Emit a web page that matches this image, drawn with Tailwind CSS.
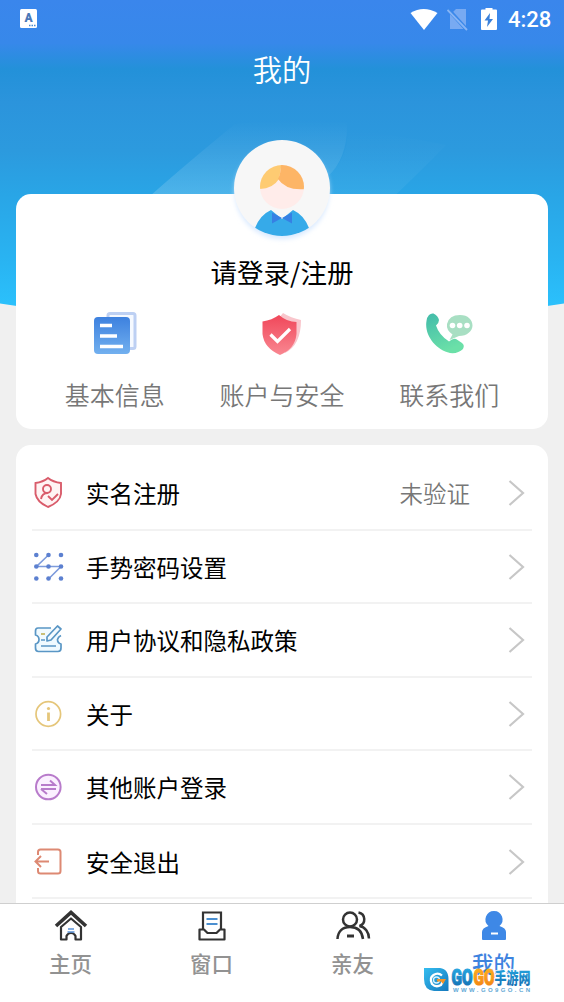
<!DOCTYPE html>
<html lang="zh-CN">
<head>
  <meta charset="UTF-8">
  <meta name="viewport" content="width=device-width, initial-scale=1.0">
  <title>我的</title>
  <script src="https://cdn.jsdelivr.net/npm/@tailwindcss/browser@4"></script>
</head>

<body class="bg-[#f0f0f0] font-['Noto_Sans_CJK_SC',sans-serif]">
  <div class="relative flex flex-col w-[564px] h-[1002px] overflow-hidden">

    <!-- Header background -->
    <svg class="absolute top-0 left-0" width="564" height="320" viewBox="0 0 564 320">
      <defs>
        <linearGradient id="sky" gradientUnits="userSpaceOnUse" x1="0" y1="0" x2="0" y2="308">
          <stop offset="0" stop-color="#3a86ec" />
          <stop offset="0.14" stop-color="#3788ea" />
          <stop offset="0.225" stop-color="#2391d9" />
          <stop offset="0.33" stop-color="#2b94dc" />
          <stop offset="0.49" stop-color="#2c9ade" />
          <stop offset="0.63" stop-color="#29a5e6" />
          <stop offset="0.85" stop-color="#29b4f2" />
          <stop offset="1" stop-color="#2bc1fc" />
        </linearGradient>
        <linearGradient id="beam" x1="0" y1="0" x2="0" y2="1">
          <stop offset="0" stop-color="#fff" stop-opacity="0" />
          <stop offset="1" stop-color="#fff" stop-opacity="0.17" />
        </linearGradient>
        <linearGradient id="beam2" x1="0" y1="0" x2="0" y2="1">
          <stop offset="0" stop-color="#fff" stop-opacity="0" />
          <stop offset="1" stop-color="#fff" stop-opacity="0.06" />
        </linearGradient>
      </defs>
      <path d="M0 0H564V303.500Q282 348 0 303.500Z" fill="url(#sky)" />
      <path d="M150 196Q185 165 235 124Q290 118 347 122Q348 158 328 176L318 196Z" fill="url(#beam)" />
      <path d="M328 176Q348 158 348 130Q400 135 446 145Q420 172 388 202H318Z" fill="url(#beam2)" />
    </svg>

    <!-- Status bar -->
    <div class="relative flex items-center h-10 pl-5 pr-3 text-white">
      <svg width="17" height="19" viewBox="0 0 17 19" class="mt-[-3px]">
        <rect width="17" height="19" rx="1.500" fill="#fff" />
        <text x="8.500" y="13" text-anchor="middle" font-family="Roboto" font-weight="900" font-size="12" fill="#4a78b8">A</text>
        <path d="M9 16.500h7" stroke="#4a8ad0" stroke-width="1.500" stroke-dasharray="1.500 1" />
      </svg>
      <svg class="ml-auto" width="28" height="24" viewBox="0 0 28 24">
        <path d="M0.500 5Q13.500 -3 27.500 5L14 22Z" fill="#fff" />
      </svg>
      <svg class="ml-[9px]" width="22" height="24" viewBox="0 0 22 24">
        <path d="M9 1H19V21H3V7Z" fill="#78aaf2" />
        <path d="M0.500 0.500L20 22" stroke="#3a88ea" stroke-width="4" />
        <path d="M0.500 2L20 22" stroke="#87b5f5" stroke-width="1.800" />
      </svg>
      <svg class="ml-3" width="16" height="24" viewBox="0 0 16 24">
        <path d="M1 1.500H4.500V-0.500H11.500V1.500H15Q16 1.500 16 2.500V21Q16 22 15 22H1Q0 22 0 21V2.500Q0 1.500 1 1.500Z" fill="#fff" />
        <path d="M9 5L3.500 12.500H7L6 19L12 11H8.500Z" fill="#3a80da" />
      </svg>
      <span class="ml-[11px] w-[44px] whitespace-nowrap font-['Roboto'] font-medium text-[22px] leading-6">4:28</span>
    </div>

    <h1 class="relative mt-3 text-center text-[29.300px] leading-8 font-[350] text-white">我的</h1>

    <!-- Profile card -->
    <section class="relative mt-[110px] mx-4 h-[235px] shrink-0 rounded-[15px] bg-white flex flex-col items-center">
      <svg class="-mt-[58px] shrink-0" width="112" height="116" viewBox="0 0 112 116">
        <defs>
          <clipPath id="face"><circle cx="56" cy="51" r="22" /></clipPath>
          <clipPath id="disc"><circle cx="56" cy="52" r="48" /></clipPath>
          <filter id="soft" x="-20%" y="-20%" width="140%" height="140%"><feGaussianBlur stdDeviation="2.500" /></filter>
        </defs>
        <circle cx="56" cy="56" r="47" fill="#d8e9ff" filter="url(#soft)" />
        <circle cx="56" cy="52" r="48" fill="#f7f7f7" />
        <circle cx="56" cy="51" r="22" fill="#ffecea" />
        <g clip-path="url(#face)">
          <path d="M30 53V26H56L53 43Q46 54 30 53Z" fill="#fecb72" />
          <path d="M55 26H80V53Q60 55 52 43Q55 38 55 26Z" fill="#fdb566" />
        </g>
        <path d="M29 92Q34 79 45 74L56 83L67 74Q78 79 83 92L84 104H28Z" fill="#36aae9" clip-path="url(#disc)" />
        <path d="M46 76.500L56 82L66 76.500V87.500L56 82L46 87.500Z" fill="#3680e4" />
      </svg>
      <p class="mt-[2px] text-[26.500px] leading-9 text-black">请登录/注册</p>

      <div class="mt-[21px] grid w-[502px] grid-cols-3 justify-items-center text-[25px] leading-9 text-[#777] font-[350]">
        <div class="flex flex-col items-center">
          <svg width="48" height="48" viewBox="0 0 48 48">
            <defs>
              <linearGradient id="doc" x1="0" y1="0" x2="0" y2="1"><stop stop-color="#3d81df" /><stop offset="1" stop-color="#72b0ef" /></linearGradient>
            </defs>
            <rect x="17" y="2.500" width="27" height="35" rx="2" fill="#f5f9ff" stroke="#bdd0f3" stroke-width="3" />
            <rect x="3" y="6" width="36" height="37" rx="4" fill="url(#doc)" />
            <path d="M9 14.500h12M9 25h17M9 35.500h23" stroke="#fff" stroke-width="3.500" />
          </svg>
          <span class="mt-[17px]">基本信息</span>
        </div>
        <div class="flex flex-col items-center">
          <svg width="48" height="48" viewBox="0 0 48 48">
            <defs>
              <linearGradient id="shield" x1="0" y1="0" x2="0" y2="1"><stop stop-color="#f0475a" /><stop offset="1" stop-color="#f98791" /></linearGradient>
            </defs>
            <path d="M25 2Q33 7 43 9Q43 34 27 42L20 8Z" fill="#f9c6cc" />
            <path d="M21 4Q29 11 38.500 11V23Q37 38 22 44Q6 37 4.500 23V10.500Q14 9 21 4Z" fill="url(#shield)" />
            <path d="M12.500 23.500L19.500 30.500L32 18" fill="none" stroke="#fff" stroke-width="3.200" />
          </svg>
          <span class="mt-[17px]">账户与安全</span>
        </div>
        <div class="flex flex-col items-center">
          <svg width="48" height="48" viewBox="0 0 48 48">
            <defs>
              <linearGradient id="phone" x1="0" y1="0" x2="0.400" y2="1"><stop stop-color="#42bbaa" /><stop offset="1" stop-color="#6be0a8" /></linearGradient>
            </defs>
            <path d="M4 4Q6 2 8.500 2.500Q13 4.500 14 9Q14 12 11 14.500Q14 24 24 30.500Q28 27 31 28L37 32Q40 34 38 38Q33 43 25 42C11 39 -1 24 1.500 10Q2 6 4 4Z" fill="url(#phone)" />
            <path d="M35 4C43 4 47.500 9 47.500 14.500S42 25 34 25L24.500 29L27.500 23.500Q21 19 22 13Q24 4 35 4Z" fill="#a8dfc3" />
            <g fill="#fff"><circle cx="27.500" cy="14.500" r="2.800" /><circle cx="34.700" cy="14.500" r="2.800" /><circle cx="42" cy="14.500" r="2.800" /></g>
          </svg>
          <span class="mt-[17px]">联系我们</span>
        </div>
      </div>
    </section>

    <!-- Menu list -->
    <section class="relative mt-4 mx-4 h-[458px] shrink-0 overflow-hidden rounded-t-[15px] bg-white px-4 pt-3 text-[23.500px] leading-9 text-black">
      <div class="flex h-[73.600px] items-center border-b-2 border-[#f2f2f2] pt-px">
        <svg width="32" height="34" viewBox="0 0 32 34" fill="none" stroke="#d95c6b" stroke-width="1.900">
          <path d="M16 2Q21 6 29 7V18Q28 26 16 31Q5 26 3.500 18V7Q11 6 16 2Z" fill="#fff4f4" />
          <circle cx="15" cy="13" r="4" /><path d="M9 23Q10 17 16 17M16 20L20 24L26 18" />
        </svg>
        <span class="ml-[22px]">实名注册</span>
        <span class="ml-auto font-[350] text-[#777]">未验证</span>
        <svg class="ml-[38px] mr-[7px]" width="17" height="28" viewBox="0 0 17 28" fill="none" stroke="#c7c7c7" stroke-width="2.200"><path d="M1.500 2L15 14L1.500 26" /></svg>
      </div>
      <div class="flex h-[73.600px] items-center border-b-2 border-[#f2f2f2] pt-[2px]">
        <svg width="32" height="34" viewBox="0 0 32 34" fill="#5c80d0">
          <path d="M16.500 5L4.500 16.500H29L17 28.500" fill="none" stroke="#7d9bdc" stroke-width="1.600" />
          <circle cx="4.300" cy="5" r="2.300" /><circle cx="16.500" cy="5" r="2.300" /><circle cx="29" cy="5" r="2.300" />
          <circle cx="4.300" cy="16.500" r="2.300" /><circle cx="16.500" cy="16.500" r="2.300" /><circle cx="29" cy="16.500" r="2.300" />
          <circle cx="4.300" cy="28.500" r="2.300" /><circle cx="16.500" cy="28.500" r="2.300" /><circle cx="29" cy="28.500" r="2.300" />
        </svg>
        <span class="ml-[22px]">手势密码设置</span>
        <svg class="ml-auto mr-[7px]" width="17" height="28" viewBox="0 0 17 28" fill="none" stroke="#c7c7c7" stroke-width="2.200"><path d="M1.500 2L15 14L1.500 26" /></svg>
      </div>
      <div class="flex h-[73.600px] items-center border-b-2 border-[#f2f2f2] pt-px">
        <svg width="32" height="34" viewBox="0 0 32 34" fill="none" stroke="#5996c5" stroke-width="1.700" stroke-linejoin="round">
          <path d="M19 5H6Q3.500 5 3.500 8V12Q7 13 7 16.500T3.500 21V25Q3.500 28.500 6.500 28.500H26Q29 28.500 29 25V21Q25.500 20 25.500 16.500Q26 14 29 12.500" fill="#f0faff" />
          <path d="M25.500 3L29 6L19 17L15 18V14Z" fill="#f4fbff" /><path d="M9 17h4M9 23h15" /><path d="M9 11h4" stroke="#c2b45f" />
        </svg>
        <span class="ml-[22px]">用户协议和隐私政策</span>
        <svg class="ml-auto mr-[7px]" width="17" height="28" viewBox="0 0 17 28" fill="none" stroke="#c7c7c7" stroke-width="2.200"><path d="M1.500 2L15 14L1.500 26" /></svg>
      </div>
      <div class="flex h-[73.600px] items-center border-b-2 border-[#f2f2f2] pt-px">
        <svg width="32" height="34" viewBox="0 0 32 34" fill="none" stroke="#e5c67a">
          <circle cx="16.300" cy="17" r="12.300" stroke-width="1.700" />
          <path d="M16.500 15.500V24" stroke-width="2.800" /><circle cx="16.500" cy="11.500" r="1.600" fill="#e5c67a" stroke="none" />
        </svg>
        <span class="ml-[22px]">关于</span>
        <svg class="ml-auto mr-[7px]" width="17" height="28" viewBox="0 0 17 28" fill="none" stroke="#c7c7c7" stroke-width="2.200"><path d="M1.500 2L15 14L1.500 26" /></svg>
      </div>
      <div class="flex h-[73.600px] items-center border-b-2 border-[#f2f2f2]">
        <svg width="32" height="34" viewBox="0 0 32 34" fill="none" stroke="#b87bcb">
          <circle cx="16.300" cy="17" r="12.300" fill="#fbf0ff" stroke-width="2" />
          <path d="M9 15H23L18 10.500M9 19H24M9 19L15 24" stroke-width="2" />
        </svg>
        <span class="ml-[22px]">其他账户登录</span>
        <svg class="ml-auto mr-[7px]" width="17" height="28" viewBox="0 0 17 28" fill="none" stroke="#c7c7c7" stroke-width="2.200"><path d="M1.500 2L15 14L1.500 26" /></svg>
      </div>
      <div class="flex h-[73.600px] items-center border-b-2 border-[#f2f2f2] pt-[2px]">
        <svg width="32" height="34" viewBox="0 0 32 34" fill="none" stroke="#dd8973" stroke-width="2">
          <path d="M6 10V7Q6 4.500 8.500 4.500H26Q28.500 4.500 28.500 7V26Q28.500 28.500 26 28.500H8.500Q6 28.500 6 26V23" />
          <path d="M17 16.500H4M9 11L3.500 16.500L9 22" />
        </svg>
        <span class="ml-[22px]">安全退出</span>
        <svg class="ml-auto mr-[7px]" width="17" height="28" viewBox="0 0 17 28" fill="none" stroke="#c7c7c7" stroke-width="2.200"><path d="M1.500 2L15 14L1.500 26" /></svg>
      </div>
    </section>

    <!-- Bottom tab bar -->
    <nav class="relative grid h-[99px] shrink-0 grid-cols-4 border-t border-[#cfcfcf] bg-white pt-[5px] text-[21.500px] leading-8 font-medium text-[#929292]">
      <div class="flex flex-col items-center">
        <svg width="34" height="34" viewBox="0 0 34 34" fill="none" stroke="#333">
          <path d="M2 17L17 3.500L32 17" stroke-width="3.600" />
          <path d="M7 18L17 9.500L27 18V30.500H21.500V27Q20 24 17 24T12.500 27V30.500H7Z" stroke-width="2.200" stroke-linejoin="round" />
          <path d="M14 20h6M13.500 23h7" stroke="#5b93d8" stroke-width="1.500" />
        </svg>
        <span class="mt-1">主页</span>
      </div>
      <div class="flex flex-col items-center">
        <svg width="34" height="34" viewBox="0 0 34 34" fill="none" stroke="#333" stroke-width="2.200">
          <path d="M8 21V3.500H26V21" />
          <path d="M4.500 20.500H9L12.500 24H21.500L25 20.500H29.500V30.500H4.500Z" stroke-linejoin="round" />
          <path d="M11.500 10h11M11.500 15h11" stroke="#4b8fd0" stroke-width="1.900" />
        </svg>
        <span class="mt-1">窗口</span>
      </div>
      <div class="flex flex-col items-center">
        <svg width="36" height="34" viewBox="0 0 36 34" fill="none" stroke="#333" stroke-width="2.500">
          <circle cx="15" cy="10.500" r="7" />
          <path d="M2.500 30C3 22 8 18 15 18S27 22 28 30" />
          <path d="M23.500 3.500C31 5 31 15 24.500 17C30 18 34 23 34 29.500" />
          <path d="M12 27h7" stroke-width="3" />
        </svg>
        <span class="mt-1">亲友</span>
      </div>
      <div class="flex flex-col items-center text-[#3e83df]">
        <svg width="34" height="34" viewBox="0 0 34 34">
          <path d="M17 2A8.500 8.500 0 0 1 22.500 17Q29 19 29 23V30Q29 31 28 31H6Q5 31 5 30V23Q5 19 11.500 17A8.500 8.500 0 0 1 17 2Z" fill="#3e88e6" />
          <path d="M14 24.500h7" stroke="#fff" stroke-width="2" />
        </svg>
        <span class="mt-1">我的</span>
      </div>
    </nav>

    <!-- Site watermark -->
    <div class="absolute left-[424px] top-[967px] flex items-start">
      <svg width="25" height="25" viewBox="0 0 25 25">
        <defs>
          <linearGradient id="logo" x1="0" y1="0" x2="1" y2="1"><stop stop-color="#34bdf0" /><stop offset="1" stop-color="#1579bd" /></linearGradient>
        </defs>
        <path d="M0 1H16Q25 2 24.500 14V24H10Q0 23 0 12Z" fill="url(#logo)" />
        <path d="M18 8.500Q14 5 9.500 8T8 17Q12 21 17 18L19 14" fill="none" stroke="#fff" stroke-width="2.300" />
        <circle cx="12.500" cy="13" r="3" fill="none" stroke="#d7f3ff" stroke-width="1.300" />
        <path d="M13 12H22L19 17L17 14.500H13Z" fill="#f59424" />
      </svg>
      <svg class="overflow-visible" width="86" height="26" viewBox="0 0 86 26">
        <defs>
          <linearGradient id="blueText" x1="0" y1="0" x2="0" y2="1"><stop stop-color="#28b0e8" /><stop offset="1" stop-color="#1268ad" /></linearGradient>
          <linearGradient id="orangeText" x1="0" y1="0" x2="0" y2="1"><stop stop-color="#ffb51f" /><stop offset="1" stop-color="#f17e12" /></linearGradient>
        </defs>
        <text x="2.500" y="18" font-family="Roboto" font-weight="900" font-size="21.500" textLength="21" lengthAdjust="spacingAndGlyphs" fill="url(#blueText)" stroke="url(#blueText)" stroke-width="1.200">GO</text>
        <text x="24.500" y="18" font-family="Roboto" font-weight="900" font-size="21.500" textLength="21" lengthAdjust="spacingAndGlyphs" fill="url(#orangeText)" stroke="url(#orangeText)" stroke-width="1.200">GO</text>
        <text x="45.500" y="16.500" font-family="Noto Sans CJK SC" font-weight="900" font-size="16" textLength="36" lengthAdjust="spacingAndGlyphs" fill="url(#blueText)" stroke="#fff" stroke-width="1.500" paint-order="stroke">手游网</text>
        <text x="4" y="24.500" font-family="Liberation Sans" font-size="6" textLength="77" font-weight="bold" fill="#62a8d5">WWW.GO9GO.CN</text>
      </svg>
    </div>
  </div>
</body>
</html>
